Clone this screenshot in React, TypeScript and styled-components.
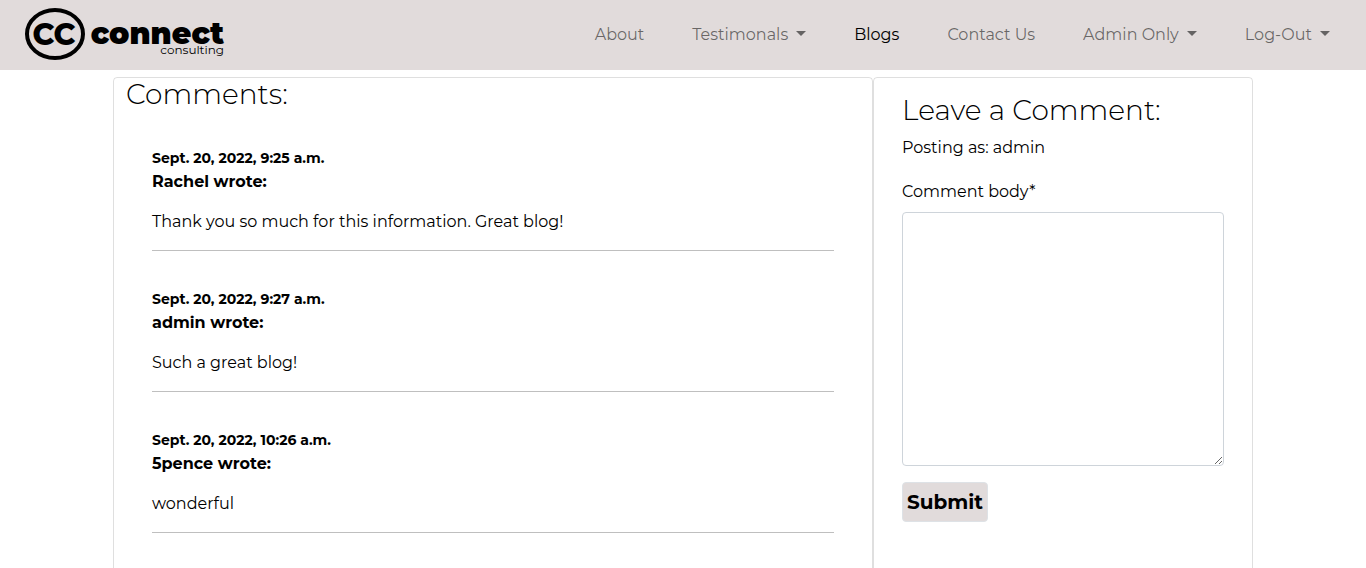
import React from "react";
import styled, { createGlobalStyle, css } from "styled-components";

const GlobalStyle = createGlobalStyle`
  *, *::before, *::after { box-sizing: border-box; }
  html { scrollbar-width: none; }
  body {
    margin: 0;
    background: #fff;
    color: #000;
    font-family: Montserrat, Inter, "Open Sans", sans-serif;
    font-size: 16px;
    font-weight: 400;
    line-height: 24px;
  }
  h2, h3, p { margin: 0; }
`;

const Navbar = styled.header`
  display: flex;
  align-items: center;
  justify-content: space-between;
  min-height: 70px;
  padding: 0 36px 0 24px;
  background: #e1dbdb;
`;

const Brand = styled.a`
  display: flex;
  color: #000;
`;

const LogoMark = styled.svg`
  display: block;
  width: 204px;
  height: 56px;
`;

const NavList = styled.ul`
  display: flex;
  flex-wrap: wrap;
  gap: 0 48px;
  margin: 0;
  padding: 0;
  list-style: none;
`;

const NavLink = styled.a<{ $active?: boolean; $menu?: boolean }>`
  display: flex;
  align-items: center;
  gap: 8px;
  color: ${(p) => (p.$active ? "#000" : "rgba(0, 0, 0, 0.55)")};
  text-decoration: none;

  ${(p) =>
    p.$menu &&
    css`
      &::after {
        content: "";
        border-top: 5px solid currentColor;
        border-left: 5px solid transparent;
        border-right: 5px solid transparent;
        margin-bottom: 4px;
      }
    `}
`;

const Columns = styled.main`
  display: grid;
  grid-template-columns: 2fr 1fr;
  max-width: 1140px;
  min-height: 600px;
  margin: 7px auto 0;
`;

const Card = styled.section<{ $form?: boolean }>`
  min-width: 0;
  padding: ${(p) => (p.$form ? "16px 28px" : "0 12px")};
  border: 1px solid rgba(0, 0, 0, 0.125);
  border-radius: 4px;
`;

const Heading = styled.h2`
  font-size: 28px;
  font-weight: 300;
  line-height: 33px;
`;

const CommentList = styled.div`
  padding: 35px 26px 0;
`;

const Comment = styled.article`
  padding-bottom: 16px;
  margin-bottom: 36px;
  border-bottom: 1px solid #bfbfbf;
`;

const CommentDate = styled.time`
  display: block;
  font-size: 14px;
  font-weight: 700;
`;

const Author = styled.h3`
  font-size: 16px;
  font-weight: 700;
  line-height: 24px;
`;

const CommentText = styled.p`
  margin-top: 16px;
`;

const Poster = styled.p`
  margin-top: 9px;
`;

const Label = styled.label`
  display: block;
  margin: 20px 0 8px;
`;

const CommentBox = styled.textarea`
  display: block;
  width: 100%;
  height: 254px;
  padding: 6px 12px;
  border: 1px solid #ced4da;
  border-radius: 4px;
  background: #fff;
  font: inherit;
  resize: vertical;
`;

const SubmitButton = styled.button`
  margin-top: 16px;
  height: 40px;
  padding: 0 4px;
  border: 1px solid #dee2e6;
  border-radius: 4px;
  background: #e1dbdb;
  color: #000;
  font-family: inherit;
  font-size: 20px;
  font-weight: 700;
  line-height: 30px;
`;

const links = [
  { label: "About" },
  { label: "Testimonals", menu: true },
  { label: "Blogs", active: true },
  { label: "Contact Us" },
  { label: "Admin Only", menu: true },
  { label: "Log-Out", menu: true },
];

const comments = [
  { date: "Sept. 20, 2022, 9:25 a.m.", author: "Rachel", text: "Thank you so much for this information. Great blog!" },
  { date: "Sept. 20, 2022, 9:27 a.m.", author: "admin", text: "Such a great blog!" },
  { date: "Sept. 20, 2022, 10:26 a.m.", author: "5pence", text: "wonderful" },
];

function Logo() {
  return (
    <LogoMark viewBox="0 0 204 56" fill="currentColor" fontFamily="Montserrat, Inter, sans-serif">
      <ellipse cx="31" cy="27" rx="28" ry="24" fill="none" stroke="currentColor" strokeWidth="4" />
      <text x="30" y="38" fontSize="30" fontWeight="800" textAnchor="middle">CC</text>
      <text x="200" y="37" fontSize="30" fontWeight="900" textAnchor="end">connect</text>
      <text x="200" y="47" fontSize="12" fontWeight="400" textAnchor="end">consulting</text>
    </LogoMark>
  );
}

export default function App() {
  return (
    <>
      <GlobalStyle />
      <Navbar>
        <Brand href="#" aria-label="Connect Consulting">
          <Logo />
        </Brand>
        <nav>
          <NavList>
            {links.map((l) => (
              <li key={l.label}>
                <NavLink href="#" $active={l.active} $menu={l.menu}>{l.label}</NavLink>
              </li>
            ))}
          </NavList>
        </nav>
      </Navbar>
      <Columns>
        <Card>
          <Heading>Comments:</Heading>
          <CommentList>
            {comments.map((c) => (
              <Comment key={c.date}>
                <CommentDate>{c.date}</CommentDate>
                <Author>{c.author} wrote:</Author>
                <CommentText>{c.text}</CommentText>
              </Comment>
            ))}
          </CommentList>
        </Card>
        <Card $form>
          <Heading>Leave a Comment:</Heading>
          <Poster>Posting as: admin</Poster>
          <form onSubmit={(e) => e.preventDefault()}>
            <Label htmlFor="comment-body">Comment body*</Label>
            <CommentBox id="comment-body" required />
            <SubmitButton type="submit">Submit</SubmitButton>
          </form>
        </Card>
      </Columns>
    </>
  );
}
